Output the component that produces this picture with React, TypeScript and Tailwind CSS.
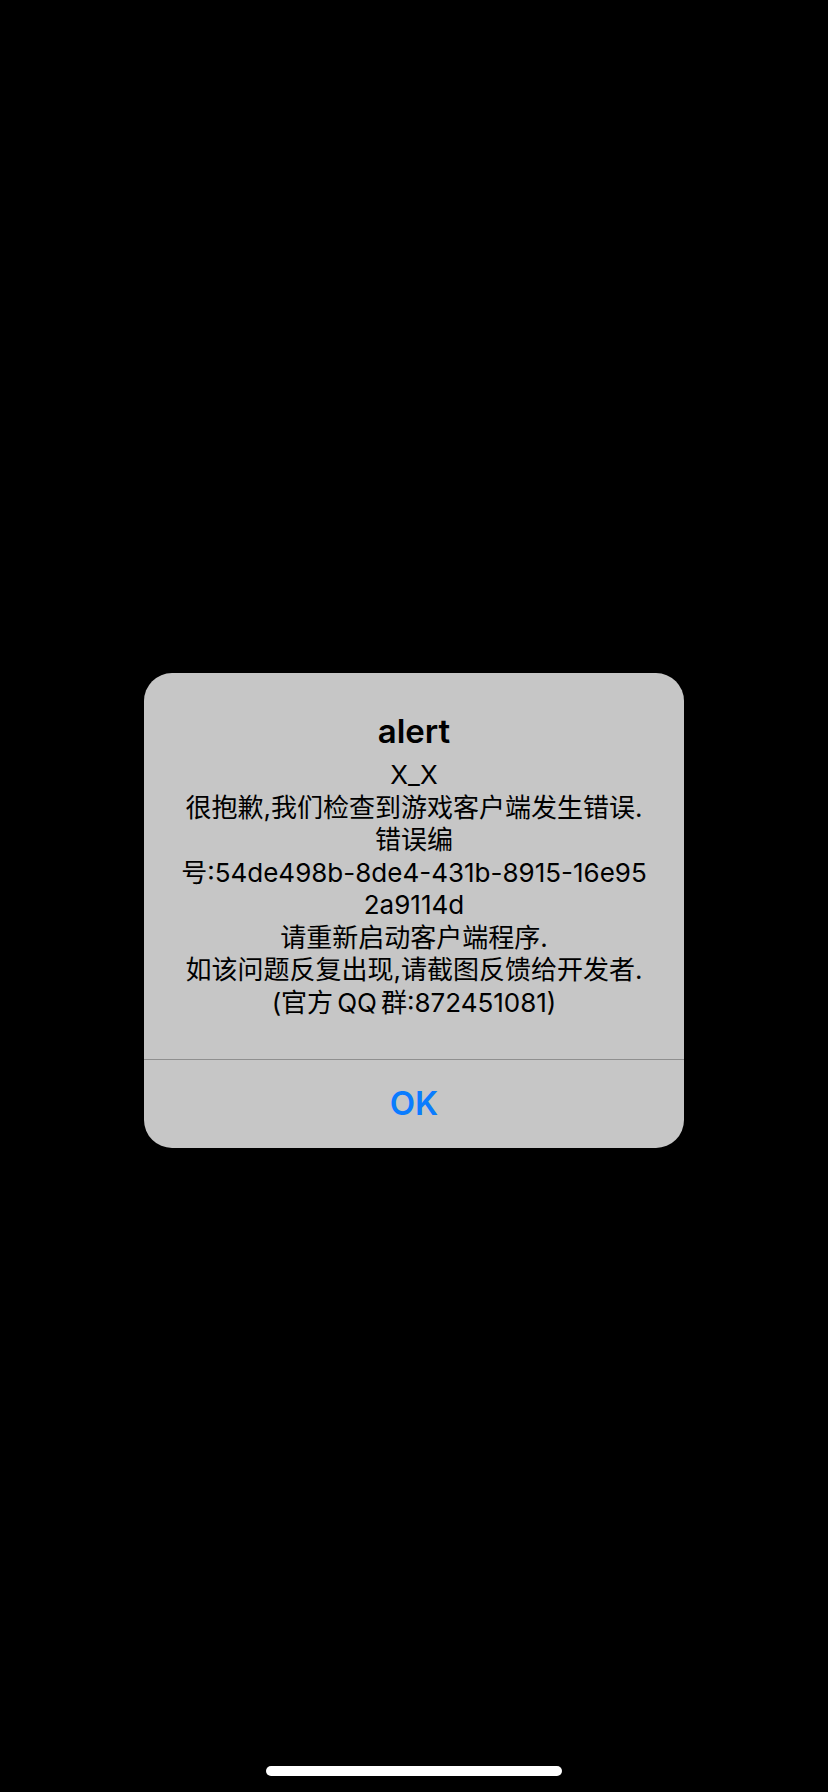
export default function App() {
  const lines = [
    "X_X",
    "很抱歉,我们检查到游戏客户端发生错误.",
    "错误编",
    "号:54de498b-8de4-431b-8915-16e95",
    "2a9114d",
    "请重新启动客户端程序.",
    "如该问题反复出现,请截图反馈给开发者.",
  ];

  return (
    <div
      className="flex h-[1792px] w-full flex-col items-center bg-black"
      style={{ fontFamily: 'Inter, "Noto Sans CJK SC", sans-serif' }}
    >
      <div className="mt-[673px] w-[540px] overflow-hidden rounded-[28px] bg-[#c6c6c6]">
        <div className="flex flex-col items-center px-[28px] pt-[38px] pb-[40px]">
          <h1 className="text-[33px] leading-[40px] font-semibold text-black">alert</h1>
          <div className="mt-[8px] flex flex-col items-center text-[26px] leading-[32.5px] text-black">
            {lines.map((l, i) => (
              <p key={i} className="whitespace-nowrap">
                {l}
              </p>
            ))}
            <p className="whitespace-nowrap">
              (官方<span className="mx-[4px]">QQ</span>群:872451081)
            </p>
          </div>
        </div>
        <div className="h-px bg-[#8f8f8f]" />
        <button className="flex h-[88px] w-full items-center justify-center text-[33px] font-semibold text-[#0a7cff]">
          OK
        </button>
      </div>
      <div className="flex-1" />
      <div className="mb-[16px] h-[10px] w-[296px] rounded-full bg-white" />
    </div>
  );
}
